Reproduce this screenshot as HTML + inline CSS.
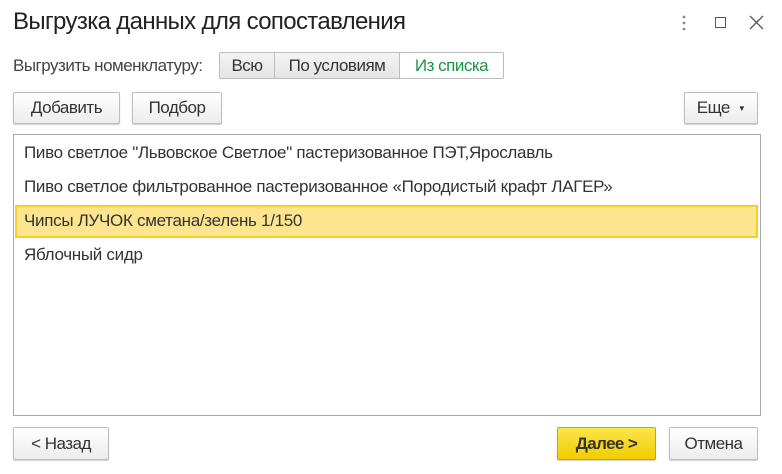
<!DOCTYPE html>
<html><head><meta charset="utf-8"><style>
*{box-sizing:border-box;margin:0;padding:0}
body{width:782px;height:474px;background:#fff;font-family:"Liberation Sans",Arial,sans-serif;color:#333;position:relative;overflow:hidden;font-size:17px}
.a{position:absolute}
.t{left:13px;top:8px;font-size:24px;color:#222;letter-spacing:-0.65px;white-space:nowrap}
.btn{position:absolute;border:1px solid #bdbdbd;border-radius:2px;background:linear-gradient(#fff,#ececec);box-shadow:0 1px 1px rgba(0,0,0,.2);display:flex;align-items:center;justify-content:center;font-size:17px;color:#333;letter-spacing:-0.5px;white-space:nowrap}
.seg{position:absolute;top:52px;height:27px;display:flex;align-items:center;justify-content:center;font-size:17px;letter-spacing:-0.5px;border:1px solid #bdbdbd;background:linear-gradient(#f4f4f4,#e4e4e4)}
.row{position:absolute;left:24px;font-size:17px;letter-spacing:-0.3px;white-space:nowrap;color:#333}
</style></head><body>
<div class="a t">Выгрузка данных для сопоставления</div>
<svg class="a" style="left:678px;top:14px" width="12" height="18"><circle cx="6" cy="3" r="1.4" fill="#888"/><circle cx="6" cy="9" r="1.4" fill="#888"/><circle cx="6" cy="15" r="1.4" fill="#888"/></svg>
<div class="a" style="left:715px;top:17px;width:11px;height:11px;border:1.3px solid #555"></div>
<svg class="a" style="left:749px;top:15px" width="15" height="15"><path d="M1 1L14 14M14 1L1 14" stroke="#555" stroke-width="1.3"/></svg>
<div class="a" style="left:13px;top:56px;font-size:17px;letter-spacing:-0.5px;color:#444">Выгрузить номенклатуру:</div>
<div class="seg" style="left:219px;width:56px;border-radius:2px 0 0 2px">Всю</div>
<div class="seg" style="left:274px;width:126px">По условиям</div>
<div class="seg" style="left:399px;width:105px;background:#fff;color:#1a9444;border-radius:0 2px 2px 0">Из списка</div>
<div class="btn" style="left:13px;top:92px;width:107px;height:32px">Добавить</div>
<div class="btn" style="left:132px;top:92px;width:90px;height:32px">Подбор</div>
<div class="btn" style="left:684px;top:92px;width:74px;height:32px">Еще<span style="font-size:8px;margin-left:8px">▼</span></div>
<div class="a" style="left:13px;top:134px;width:748px;height:282px;border:1px solid #a8a8a8"></div>
<div class="a" style="left:15px;top:205px;width:743px;height:33px;background:#fde58f;border:2px solid #f4cf2c"></div>
<div class="row" style="top:143px">Пиво светлое "Львовское Светлое" пастеризованное ПЭТ,Ярославль</div>
<div class="row" style="top:177px">Пиво светлое фильтрованное пастеризованное «Породистый крафт ЛАГЕР»</div>
<div class="row" style="top:211px">Чипсы ЛУЧОК сметана/зелень 1/150</div>
<div class="row" style="top:245px">Яблочный сидр</div>
<div class="btn" style="left:13px;top:427px;width:96px;height:33px">&lt; Назад</div>
<div class="btn" style="left:557px;top:427px;width:99px;height:33px;background:linear-gradient(#fbe549,#f2cd00);border-color:#c9a800;font-weight:bold;color:#333;letter-spacing:-0.6px">Далее &gt;</div>
<div class="btn" style="left:669px;top:427px;width:89px;height:33px">Отмена</div>
</body></html>
